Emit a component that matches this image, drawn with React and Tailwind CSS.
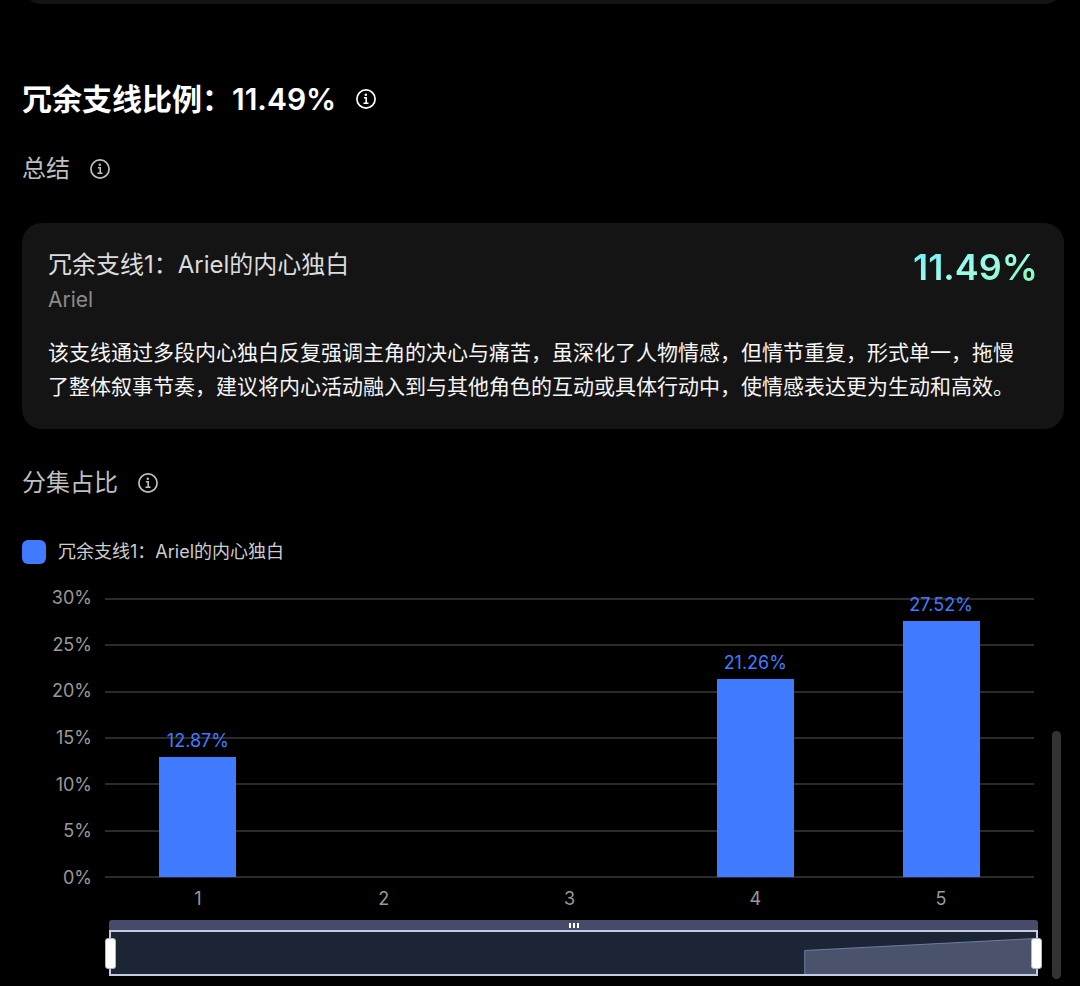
import React, { useState } from 'react';

const episodes = [
  { label: '1', value: 12.87 },
  { label: '2', value: 0 },
  { label: '3', value: 0 },
  { label: '4', value: 21.26 },
  { label: '5', value: 27.52 },
];

const ticks = [30, 25, 20, 15, 10, 5, 0];
const maxValue = 30;

const thumb =
  'pointer-events-none absolute inset-0 h-full w-full appearance-none bg-transparent [&::-webkit-slider-thumb]:pointer-events-auto [&::-webkit-slider-thumb]:h-[31px] [&::-webkit-slider-thumb]:w-[11px] [&::-webkit-slider-thumb]:appearance-none [&::-webkit-slider-thumb]:rounded-[3px] [&::-webkit-slider-thumb]:border [&::-webkit-slider-thumb]:border-solid [&::-webkit-slider-thumb]:border-[#acb8d1] [&::-webkit-slider-thumb]:bg-white';

const InfoButton = ({ label, className }) => (
  <button type="button" aria-label={label} className={className}>
    <svg viewBox="0 0 20 20" className="h-5 w-5" fill="none" stroke="currentColor">
      <circle cx="10" cy="10" r="9.1" strokeWidth="1.7" />
      <circle cx="9.8" cy="5.8" r="1.25" fill="currentColor" stroke="none" />
      <path d="M7.9 8.8h2.3v5.2M7.5 14.2h5" strokeWidth="1.6" />
    </svg>
  </button>
);

const SectionTitle = ({ children }) => (
  <div className="flex items-center gap-5 text-[#bfbfbf]">
    <h3 className="text-2xl leading-9">{children}</h3>
    <InfoButton label={`${children}说明`} className="shrink-0" />
  </div>
);

const SubplotCard = ({ title, role, ratio, summary }) => (
  <article className="rounded-[20px] bg-[#141414] px-[26px] pt-6 pb-[25px]">
    <div className="flex items-start justify-between">
      <div>
        <h4 className="text-2xl leading-9 text-[#dcdcdc]">{title}</h4>
        <p className="text-[21px] leading-[34px] text-[#8c8c8c]">{role}</p>
      </div>
      <span className="bg-linear-to-br from-[#63eeff] via-[#9dfbe9] to-[#7dfaa8] bg-clip-text text-4xl leading-10 font-semibold text-transparent">
        {ratio}
      </span>
    </div>
    <p className="mt-[19px] pr-4 text-[21px] leading-[34px] text-[#f5f5f5]">{summary}</p>
  </article>
);

const BarChart = () => (
  <div className="grid grid-cols-[70px_1fr] gap-x-[13px]">
    <ul className="-my-3 flex flex-col justify-between text-right text-lg leading-6 text-[#999999]">
      {ticks.map((t) => (
        <li key={t}>{t}%</li>
      ))}
    </ul>
    <div className="grid h-[280px]">
      <div className="col-start-1 row-start-1 flex flex-col justify-between">
        {ticks.map((t) => (
          <div key={t} className="h-[2px] bg-[#2b2b2b]" />
        ))}
      </div>
      <div className="col-start-1 row-start-1 grid grid-cols-5 pb-px">
        {episodes.map((e) => (
          <div key={e.label} className="flex h-full flex-col items-center justify-end">
            {e.value > 0 && (
              <>
                <span className="mb-1 text-lg leading-6 text-[#407bff]">{e.value}%</span>
                <div
                  className="w-[77px] shrink-0 bg-[#407bff]"
                  style={{ height: `${(e.value / maxValue) * 100}%` }}
                />
              </>
            )}
          </div>
        ))}
      </div>
    </div>
    <div className="col-start-2 mt-[9px] grid grid-cols-5 text-center text-lg leading-6 text-[#999999]">
      {episodes.map((e) => (
        <span key={e.label}>{e.label}</span>
      ))}
    </div>
  </div>
);

const RangeZoom = () => {
  const [start, setStart] = useState(0);
  const [end, setEnd] = useState(100);

  return (
    <div className="-mr-2 ml-[83px]">
      <div className="mx-1 flex h-[10px] items-center justify-center gap-[2px] rounded-t-[3px] bg-[#464b69]">
        <i className="h-[5px] w-[2px] bg-white" />
        <i className="h-[5px] w-[2px] bg-white" />
        <i className="h-[5px] w-[2px] bg-white" />
      </div>
      <div className="relative">
        <div className="mx-1 h-[46px] border-2 border-[#c3cce0] bg-[#1c2533]">
          <svg viewBox="0 0 100 42" preserveAspectRatio="none" className="h-full w-full">
            <path d="M75 42V18.5L100 6.5V42Z" fill="#4a536b" />
            <path
              d="M75 42V18.5L100 6.5"
              fill="none"
              stroke="#6d7da8"
              vectorEffect="non-scaling-stroke"
            />
          </svg>
        </div>
        <input
          type="range"
          aria-label="起始集"
          value={start}
          onChange={(e) => setStart(Math.min(Number(e.target.value), end))}
          className={thumb}
        />
        <input
          type="range"
          aria-label="结束集"
          value={end}
          onChange={(e) => setEnd(Math.max(Number(e.target.value), start))}
          className={thumb}
        />
      </div>
    </div>
  );
};

export default function App() {
  return (
    <main className="relative min-h-screen bg-black pr-4 pb-[10px] pl-[22px] font-['Inter','Noto_Sans_CJK_SC',sans-serif]">
      <div className="flex h-1 flex-col justify-end overflow-hidden">
        <div className="h-10 shrink-0 rounded-b-[20px] bg-[#141414]" />
      </div>

      <div className="mt-[75px] flex items-center gap-5 text-white">
        <h2 className="text-3xl leading-10 font-semibold">冗余支线比例：11.49%</h2>
        <InfoButton label="冗余支线比例说明" className="shrink-0" />
      </div>

      <section className="mt-8">
        <SectionTitle>总结</SectionTitle>
        <div className="mt-9">
          <SubplotCard
            title="冗余支线1：Ariel的内心独白"
            role="Ariel"
            ratio="11.49%"
            summary="该支线通过多段内心独白反复强调主角的决心与痛苦，虽深化了人物情感，但情节重复，形式单一，拖慢了整体叙事节奏，建议将内心活动融入到与其他角色的互动或具体行动中，使情感表达更为生动和高效。"
          />
        </div>
      </section>

      <section className="mt-9">
        <SectionTitle>分集占比</SectionTitle>
        <div className="mt-[39px] flex items-center gap-3">
          <span className="h-6 w-6 rounded-md bg-[#407bff]" />
          <span className="text-lg leading-6 text-[#cccccc]">冗余支线1：Ariel的内心独白</span>
        </div>
        <div className="mt-[34px] pr-[30px]">
          <BarChart />
          <div className="mt-[9px]">
            <RangeZoom />
          </div>
        </div>
      </section>

      <div className="absolute right-[19px] bottom-[7px] h-[248px] w-[9px] rounded-full bg-[#333333]" />
    </main>
  );
}
